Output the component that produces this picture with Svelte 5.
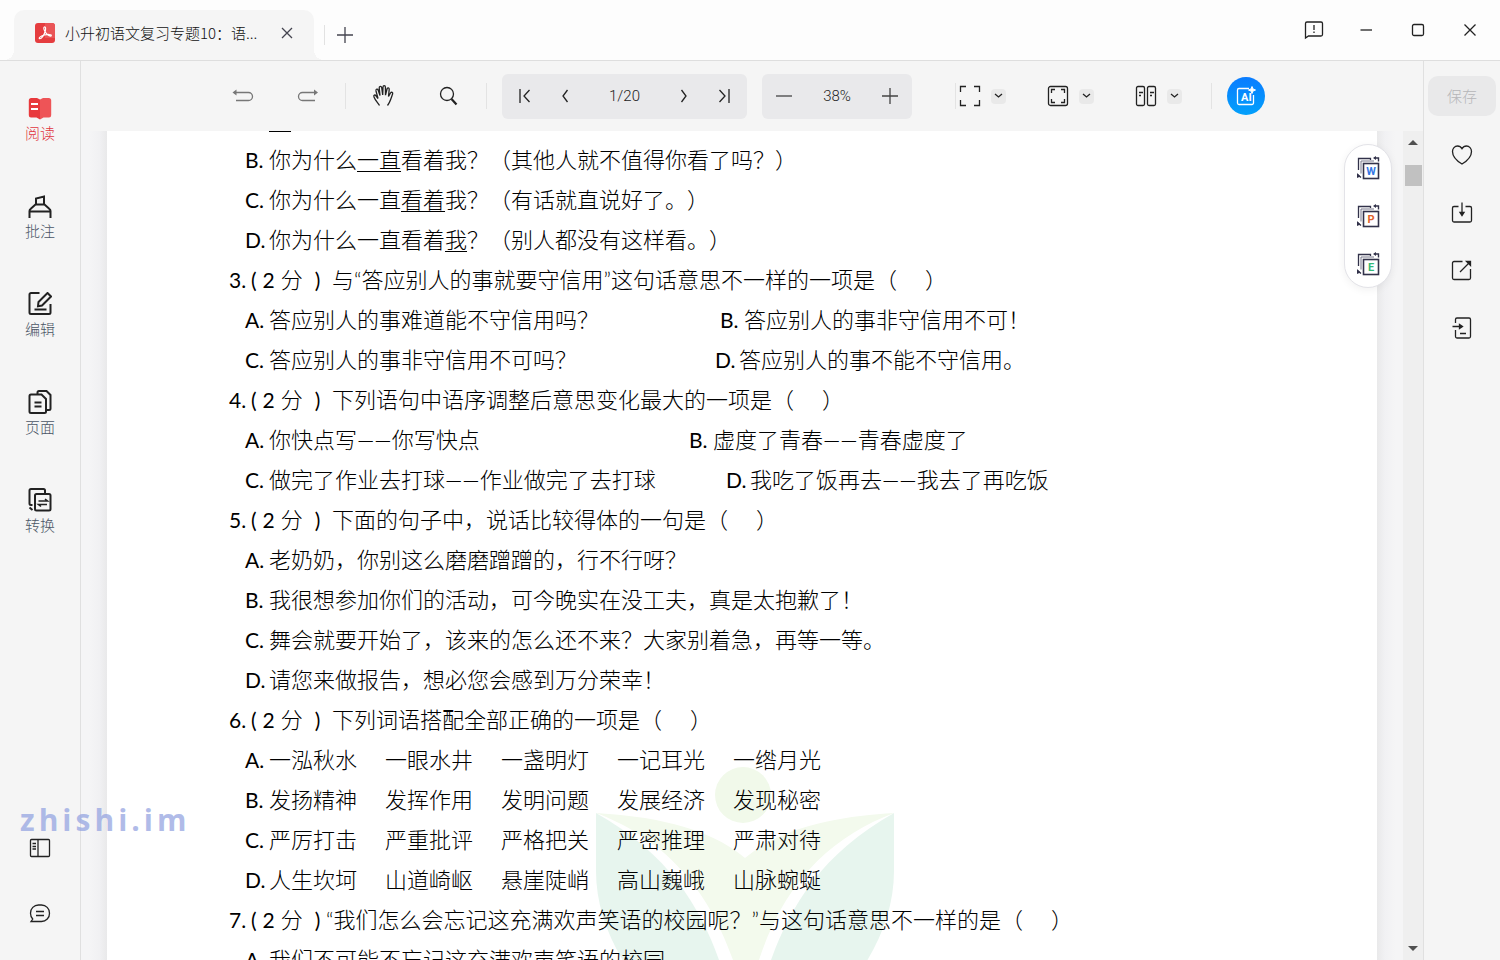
<script lang="ts">
  type Part = string | { u: string };

  interface Row {
    kind: "question" | "option" | "pair" | "words";
    label: string;
    parts?: Part[];
    first?: string;
    second?: string;
    secondLabel?: string;
    width?: number;
    words?: string[];
  }

  const modes = [
    { id: "read", label: "阅读" },
    { id: "annotate", label: "批注" },
    { id: "edit", label: "编辑" },
    { id: "pages", label: "页面" },
    { id: "convert", label: "转换" },
  ];

  const rows: Row[] = [
    { kind: "option", label: "A.", parts: [{ u: "你" }] },
    { kind: "option", label: "B.", parts: ["你为什么", { u: "一直" }, "看着我？（其他人就不值得你看了吗？）"] },
    { kind: "option", label: "C.", parts: ["你为什么一直", { u: "看着" }, "我？（有话就直说好了。）"] },
    { kind: "option", label: "D.", parts: ["你为什么一直看着", { u: "我" }, "？（别人都没有这样看。）"] },
    { kind: "question", label: "3.", parts: ["与“答应别人的事就要守信用”这句话意思不一样的一项是（　 ）"] },
    { kind: "pair", label: "A.", first: "答应别人的事难道能不守信用吗？", secondLabel: "B.", second: "答应别人的事非守信用不可！", width: 475 },
    { kind: "pair", label: "C.", first: "答应别人的事非守信用不可吗？", secondLabel: "D.", second: "答应别人的事不能不守信用。", width: 470 },
    { kind: "question", label: "4.", parts: ["下列语句中语序调整后意思变化最大的一项是（　 ）"] },
    { kind: "pair", label: "A.", first: "你快点写——你写快点", secondLabel: "B.", second: "虚度了青春——青春虚度了", width: 444 },
    { kind: "pair", label: "C.", first: "做完了作业去打球——作业做完了去打球", secondLabel: "D.", second: "我吃了饭再去——我去了再吃饭", width: 481 },
    { kind: "question", label: "5.", parts: ["下面的句子中，说话比较得体的一句是（　 ）"] },
    { kind: "option", label: "A.", parts: ["老奶奶，你别这么磨磨蹭蹭的，行不行呀？"] },
    { kind: "option", label: "B.", parts: ["我很想参加你们的活动，可今晚实在没工夫，真是太抱歉了！"] },
    { kind: "option", label: "C.", parts: ["舞会就要开始了，该来的怎么还不来？大家别着急，再等一等。"] },
    { kind: "option", label: "D.", parts: ["请您来做报告，想必您会感到万分荣幸！"] },
    { kind: "question", label: "6.", parts: ["下列词语搭配全部正确的一项是（　 ）"] },
    { kind: "words", label: "A.", words: ["一泓秋水", "一眼水井", "一盏明灯", "一记耳光", "一绺月光"] },
    { kind: "words", label: "B.", words: ["发扬精神", "发挥作用", "发明问题", "发展经济", "发现秘密"] },
    { kind: "words", label: "C.", words: ["严厉打击", "严重批评", "严格把关", "严密推理", "严肃对待"] },
    { kind: "words", label: "D.", words: ["人生坎坷", "山道崎岖", "悬崖陡峭", "高山巍峨", "山脉蜿蜒"] },
    { kind: "question", label: "7.", parts: ["“我们怎么会忘记这充满欢声笑语的校园呢？”与这句话意思不一样的是（　 ）"] },
    { kind: "option", label: "A.", parts: ["我们不可能不忘记这充满欢声笑语的校园"] },
  ];

  const exports = [
    { letter: "W", color: "#3478e5", title: "转Word" },
    { letter: "P", color: "#e0622c", title: "转PPT" },
    { letter: "E", color: "#35b978", title: "转Excel" },
  ];

  let mode = $state("read");
</script>

{#snippet chevron()}
  <button class="chevron" aria-label="展开">
    <svg width="9" height="6" viewBox="0 0 9 6"><path d="M1 1l3.5 3L8 1" /></svg>
  </button>
{/snippet}

<div class="app">
  <header class="titlebar">
    <div class="tab">
      <svg class="pdf" width="20" height="20" viewBox="0 0 20 20">
        <rect width="20" height="20" rx="3" fill="#e53d3f" />
        <path d="M10 0h7a3 3 0 0 1 3 3v12H10z" fill="#ea5557" />
        <path
          d="M9.300 4C10.800 3.400 10.900 6 10.100 8.800 9.100 12 6.400 16.200 4.600 15.700 3.200 15 6 12.800 9.500 12c3-.8 7-.8 6.800.6-.3 1.300-3.800-.3-5.300-2.600C9.500 7.800 8.300 4.700 9.300 4z"
          fill="none"
          stroke="#fff"
          stroke-width="1.2"
        />
      </svg>
      <span class="tab-title">小升初语文复习专题10：语...</span>
      <button class="tab-close" aria-label="关闭标签">
        <svg width="12" height="12" viewBox="0 0 12 12"><path d="M1 1l10 10M11 1L1 11" /></svg>
      </button>
    </div>
    <span class="tab-divider"></span>
    <button class="new-tab" aria-label="新建标签">
      <svg width="16" height="16" viewBox="0 0 16 16"><path d="M8 0v16M0 8h16" /></svg>
    </button>
    <div class="window-controls">
      <button aria-label="反馈">
        <svg width="20" height="20" viewBox="0 0 20 20">
          <path d="M1.500 18V3.500a1.500 1.500 0 0 1 1.500-1.500h14a1.500 1.500 0 0 1 1.500 1.500v11a1.500 1.500 0 0 1-1.500 1.500H4.500z" />
          <path d="M10 5v5M10 11.500v1.500" />
        </svg>
      </button>
      <button aria-label="最小化">
        <svg width="20" height="20" viewBox="0 0 20 20"><path d="M4.500 10h11.500" /></svg>
      </button>
      <button aria-label="最大化">
        <svg width="20" height="20" viewBox="0 0 20 20"><rect x="4.500" y="4.500" width="11" height="11" rx="1.500" /></svg>
      </button>
      <button aria-label="关闭">
        <svg width="20" height="20" viewBox="0 0 20 20"><path d="M4.500 4.500l11 11M15.500 4.500l-11 11" /></svg>
      </button>
    </div>
  </header>

  <div class="body">
    <nav class="sidebar">
      {#each modes as m}
        <button class="mode" class:active={mode === m.id} onclick={() => (mode = m.id)}>
          <svg width="24" height="24" viewBox="0 0 24 24">
            {#if m.id === "read"}
              <path d="M.8 4.500A2.500 2.500 0 0 1 3.300 2H9l3 1.500V23.500l-3.500-2H3A2.200 2.200 0 0 1 .8 19.300z" fill="#e8393c" stroke="none" />
              <path d="M12 3.500L15 2h5.700a2.500 2.500 0 0 1 2.500 2.500v14.800a2.200 2.200 0 0 1-2.200 2.200h-5.500L12 23.500z" fill="#ee5457" stroke="none" />
              <path d="M3 8h7M3 13h7" stroke="#fff" />
            {:else if m.id === "annotate"}
              <path d="M1.500 24v-7c0-1 .4-1.700 1.300-2.200L7.500 10.500h9l4.700 4.300c.9.500 1.300 1.200 1.300 2.200V24M1.500 17.500h21" />
              <path d="M8 10.500V4.500l8-2v8" />
            {:else if m.id === "edit"}
              <path d="M11.500 1H3a1.500 1.500 0 0 0-1.500 1.500v18A1.500 1.500 0 0 0 3 22h18a1.500 1.500 0 0 0 1.500-1.500v-8.500M6.500 17.500h12" />
              <path d="M19.500 1l3.500 3.500L14 13.500l-4 .7.500-4.200z" />
            {:else if m.id === "pages"}
              <path d="M9.500 4V2.500c0-.8.500-1.500 1.500-1.500h7.500l4 4v13.500c0 1-.5 1.500-1.500 1.500h-2" />
              <path d="M3 4.500h10.500l4.500 4.500v12.500c0 1-.5 1.500-1.500 1.500H3c-1 0-1.500-.5-1.500-1.500V6c0-1 .5-1.500 1.500-1.500zM6.500 12.500h7M6.500 16.500h7" />
            {:else}
              <path d="M4.500 17H3c-1 0-1.500-.5-1.500-1.500V2.500C1.500 1.500 2 1 3 1h12.500c1 0 1.500.5 1.500 1.500v3" />
              <rect x="7" y="6" width="15.5" height="16.5" rx="1.5" />
              <path d="M10.500 13h9l-2.500-2M19 16.500h-8.500l2.500 2" stroke-width="1.6" />
              <path d="M1.500 19.500l3 2.500" />
            {/if}
          </svg>
          <span>{m.label}</span>
        </button>
      {/each}
      <div class="sidebar-bottom">
        <button aria-label="侧边栏">
          <svg width="22" height="22" viewBox="0 0 22 22">
            <rect x="1.5" y="2.5" width="19" height="17" rx="1" />
            <path d="M9 2.500v17M3.500 6.500h3.500M3.500 9.500h3.500M3.500 12h3.500" />
          </svg>
        </button>
        <button aria-label="评论">
          <svg width="22" height="22" viewBox="0 0 22 22">
            <path d="M2 19.500h10.500a8 8 0 0 0 8-8.300 8 8 0 0 0-8-8.200h-3a8 8 0 0 0-8 8.200c0 2.500.8 4.300 2.200 5.800zM7 9.500h8M7 13.500h8" />
          </svg>
        </button>
      </div>
    </nav>

    <main class="main">
      <div class="toolbar">
        <div class="tools">
          <button class="dim" aria-label="撤销">
            <svg width="24" height="24" viewBox="0 0 24 24">
              <path d="M3 8.500h14.500a4 4 0 0 1 0 8H5" />
              <path d="M5.500 5.500v6L1.500 8.500z" fill="#777" stroke="none" />
            </svg>
          </button>
          <button class="dim" aria-label="重做">
            <svg width="24" height="24" viewBox="0 0 24 24">
              <path d="M20 8.500H6.500a4 4 0 0 0 0 8H19" />
              <path d="M18 5.500v6l4-3z" fill="#777" stroke="none" />
            </svg>
          </button>
        </div>
        <span class="divider"></span>
        <div class="tools">
          <button aria-label="抓手">
            <svg width="24" height="24" viewBox="0 0 24 24">
              <path
                d="M7.500 21.500c-1.500-2.500-4-4.500-5.500-8.500-.8-2 1-2.700 2-1.200L6 14.500 4 7c-.4-2 1.600-2.500 2.200-.8L8 11.500 7.200 4c-.1-2 2.100-2.200 2.500-.3l1 7.300.3-8c.1-1.800 2.300-1.700 2.400 0l.1 8.200L15 5c.4-1.700 2.400-1.300 2.200.5l-.7 7 2-3.500c1-1.500 2.700-.5 2.100 1-1.600 4.500-2.600 8.500-5.100 11.500"
              />
            </svg>
          </button>
          <button aria-label="搜索">
            <svg width="24" height="24" viewBox="0 0 24 24">
              <circle cx="10" cy="10" r="6.5" />
              <path d="M14.500 15l5 5.500" stroke-width="2.2" />
            </svg>
          </button>
        </div>
        <span class="divider"></span>
        <div class="box pager">
          <button aria-label="第一页"><svg width="16" height="16" viewBox="0 0 16 16"><path d="M3 1v14M12.500 2L7 8l5.500 6" /></svg></button>
          <button aria-label="上一页"><svg width="16" height="16" viewBox="0 0 16 16"><path d="M10.500 2L6 8l4.500 6" /></svg></button>
          <span class="value">1/20</span>
          <button aria-label="下一页"><svg width="16" height="16" viewBox="0 0 16 16"><path d="M5.500 2L10 8l-4.500 6" /></svg></button>
          <button aria-label="最后一页"><svg width="16" height="16" viewBox="0 0 16 16"><path d="M13 1v14M3.500 2L9 8l-5.500 6" /></svg></button>
        </div>
        <div class="box zoom">
          <button aria-label="缩小"><svg width="16" height="16" viewBox="0 0 16 16"><path d="M0 8h16" /></svg></button>
          <span class="value">38%</span>
          <button aria-label="放大"><svg width="16" height="16" viewBox="0 0 16 16"><path d="M0 8h16M8 0v16" /></svg></button>
        </div>
        <span class="divider wide"></span>
        <div class="views">
          <div class="split">
            <button aria-label="全屏">
              <svg width="24" height="24" viewBox="0 0 24 24"><path d="M2.500 8V2.500H8M16 2.500h5.500V8M21.500 16v5.500H16M8 21.500H2.500V16" /></svg>
            </button>
            {@render chevron()}
          </div>
          <div class="split">
            <button aria-label="适合页面">
              <svg width="24" height="24" viewBox="0 0 24 24">
                <rect x="2.5" y="2.5" width="19" height="19" rx="2" />
                <path d="M5.500 9V5.500H9M15 5.500h3.500V9M18.500 15v3.500H15M9 18.500H5.500V15" />
              </svg>
            </button>
            {@render chevron()}
          </div>
          <div class="split">
            <button aria-label="双页">
              <svg width="24" height="24" viewBox="0 0 24 24">
                <rect x="2.5" y="2.5" width="8" height="19" rx="1.5" />
                <rect x="13.5" y="2.5" width="8" height="19" rx="1.5" />
                <path d="M5 8.500h4M5 11.500h2M16 8.500h4M16 11.500h2" />
              </svg>
            </button>
            {@render chevron()}
          </div>
        </div>
        <span class="divider last"></span>
        <button class="ai" aria-label="AI">
          <svg width="38" height="38" viewBox="0 0 38 38">
            <defs>
              <linearGradient id="ai-fill" x1="0" y1="0" x2="0" y2="1">
                <stop offset="0" stop-color="#0a7cff" />
                <stop offset="1" stop-color="#02a0fb" />
              </linearGradient>
            </defs>
            <circle cx="19" cy="19" r="19" fill="url(#ai-fill)" stroke="none" />
            <path d="M22 11.500H12a1.500 1.500 0 0 0-1.500 1.500v13a1.500 1.500 0 0 0 1.500 1.500h13a1.500 1.500 0 0 0 1.500-1.500V18" stroke="#fff" />
            <path d="M25 9.500l1 2.500 2.500 1-2.500 1-1 2.500-1-2.500-2.500-1 2.500-1z" fill="#fff" stroke="#fff" stroke-width="1" />
            <text x="14" y="24" fill="#fff" stroke="none" font-size="11" font-weight="700">AI</text>
          </svg>
        </button>
      </div>

      <div class="viewer">
        <div class="gutter left"></div>
        <article class="sheet">
          <svg class="leaf" width="298" height="260" viewBox="0 0 298 260">
            <circle cx="147" cy="28" r="28" fill="#f1f9ea" />
            <path d="M0 46C50 49 110 58 149 91 188 58 248 49 298 46 240 68 190 110 163 193V260H137V193C108 110 58 68 0 46z" fill="#f3faed" />
            <path d="M0 46C72 86 104 140 123 193L140 260H80C32 212 0 160 0 104z" fill="#e7f5ee" />
            <path d="M298 46C226 86 194 140 175 193L158 260h60c48-48 80-100 80-156z" fill="#e7f5ee" />
          </svg>
          {#each rows as row}
            <div class="row" class:question={row.kind === "question"}>
              {#if row.kind === "question"}
                <span class="number">{row.label}</span>
                <span class="score"><span>(</span><span>2</span><span class="unit">分</span><span class="close">)</span></span>
                <span class="stem" class:quoted={row.label === "7."}>{#each row.parts ?? [] as part}{part}{/each}</span>
              {:else if row.kind === "option"}
                <span class="label">{row.label}</span>
                <span>{#each row.parts ?? [] as part}{#if typeof part === "string"}{part}{:else}<u>{part.u}</u>{/if}{/each}</span>
              {:else if row.kind === "pair"}
                <div class="cell" style="width: {row.width}px"><span class="label">{row.label}</span><span>{row.first}</span></div>
                <div class="cell"><span class="label">{row.secondLabel}</span><span>{row.second}</span></div>
              {:else}
                <span class="label">{row.label}</span>
                <div class="words">
                  {#each row.words ?? [] as word}<span>{word}</span>{/each}
                </div>
              {/if}
            </div>
          {/each}
        </article>
        <div class="gutter right"></div>
        <div class="scrollbar">
          <span class="arrow up"></span>
          <span class="thumb"></span>
          <span class="arrow down"></span>
        </div>
        <div class="export">
          {#each exports as item}
            <button aria-label={item.title}>
              <svg width="24" height="24" viewBox="0 0 24 24">
                <path d="M2.500 14V2.500H14.500V4" />
                <path d="M5 17.500V5H18" stroke-width="1" stroke="#77778a" />
                <rect x="7.500" y="7.500" width="15" height="15" fill="#fff" stroke-width="1.6" />
                <path d="M18.500 2H22.500V5.500M1.500 18.500l3.500 3" stroke-width="1.4" />
                <path d="M20 0v4l-3-2zM1 17v5l3.500-1.500z" fill="#32324a" stroke="none" />
                <text x="15" y="19" text-anchor="middle" fill={item.color} stroke="none" font-size="11" font-weight="700">{item.letter}</text>
              </svg>
            </button>
          {/each}
        </div>
      </div>
    </main>

    <aside class="actions">
      <button class="save" disabled>保存</button>
      <button aria-label="收藏">
        <svg width="24" height="24" viewBox="0 0 24 24">
          <path d="M12 21C7 18 2.500 13.500 2.500 8.500c0-3 2.200-5.500 5-5.500 2 0 3.500 1 4.500 2.700C13 4 14.500 3 16.500 3c2.800 0 5 2.500 5 5.500 0 5-4.500 9.500-9.500 12.500z" />
        </svg>
      </button>
      <button aria-label="下载">
        <svg width="24" height="24" viewBox="0 0 24 24">
          <path d="M8.500 5.500H4A1.500 1.500 0 0 0 2.500 7v12.500A1.500 1.500 0 0 0 4 21h16a1.500 1.500 0 0 0 1.500-1.500V7A1.500 1.500 0 0 0 20 5.500h-4.500M12 1.500V14" />
          <path d="M10 11.500h4l-2 3z" fill="#222" />
        </svg>
      </button>
      <button aria-label="分享">
        <svg width="24" height="24" viewBox="0 0 24 24">
          <path d="M12.500 2.500H4A1.500 1.500 0 0 0 2.500 4v15A1.500 1.500 0 0 0 4 20.500h15a1.500 1.500 0 0 0 1.500-1.500v-9M10 13L19 4" />
          <path d="M16.500 2.500h4V6.500z" fill="#222" />
        </svg>
      </button>
      <button aria-label="导出">
        <svg width="24" height="24" viewBox="0 0 24 24">
          <path d="M5.500 6V2.500A1.500 1.500 0 0 1 7 1h12a1.500 1.500 0 0 1 1.500 1.500v17A1.500 1.500 0 0 1 19 21H7a1.500 1.500 0 0 1-1.500-1.500V13M2.500 9.500H11M10 16.500h6" />
          <path d="M9.500 7.500v4l3-2z" fill="#222" />
        </svg>
      </button>
    </aside>
  </div>

  <div class="site-mark">zhishi.im</div>
</div>

<style>
  :global(body) {
    margin: 0;
    overflow: hidden;
    font-family: "Noto Sans CJK SC", sans-serif;
  }

  button {
    display: flex;
    align-items: center;
    justify-content: center;
    flex: none;
    padding: 0;
    border: 0;
    background: none;
    color: inherit;
    font: inherit;
  }

  svg {
    flex: none;
    fill: none;
    stroke: #222;
    stroke-width: 1.3;
  }

  svg text { font-family: Roboto, sans-serif; }

  .app {
    position: relative;
    display: flex;
    flex-direction: column;
    height: 100vh;
    background: #f5f5f5;
    color: #222;
  }

  .titlebar {
    display: flex;
    align-items: flex-end;
    height: 60px;
    padding-left: 14px;
    border-bottom: 1px solid #dedede;
    background: #fdfdfd;
  }

  .tab {
    position: relative;
    display: flex;
    align-items: center;
    box-sizing: border-box;
    width: 300px;
    height: 50px;
    padding: 0 21px 4px 21px;
    border-radius: 10px 10px 0 0;
    background: #f5f5f5;
  }

  /* flared feet of the tab */
  .tab::before,
  .tab::after {
    content: "";
    position: absolute;
    bottom: 0;
    width: 10px;
    height: 10px;
  }

  .tab::before {
    right: 100%;
    background: radial-gradient(circle at 0 0, transparent 10px, #f5f5f5 10px);
  }

  .tab::after {
    left: 100%;
    background: radial-gradient(circle at 100% 0, transparent 10px, #f5f5f5 10px);
  }

  .pdf { stroke: none; }

  .tab-title {
    flex: 1;
    margin-left: 10px;
    font-size: 15px;
    font-weight: 300;
    line-height: 20px;
    color: #111;
    white-space: nowrap;
  }

  .tab-close svg,
  .new-tab svg { stroke: #44444f; }

  .tab-divider {
    width: 1px;
    height: 20px;
    margin: 0 12px 15px 10px;
    background: #e2e2e2;
  }

  .new-tab { margin-bottom: 17px; }

  .window-controls {
    display: flex;
    gap: 32px;
    margin: 0 20px 20px auto;
  }

  .body {
    display: flex;
    flex: 1;
    min-height: 0;
  }

  .sidebar {
    display: flex;
    flex-direction: column;
    align-items: center;
    box-sizing: border-box;
    width: 81px;
    padding: 35px 0 36px;
    border-right: 1px solid #e0e0e0;
  }

  .mode {
    flex-direction: column;
    height: 50px;
    margin-bottom: 48px;
    font-size: 15px;
    font-weight: 300;
    line-height: 26px;
    color: #4b5566;
  }

  .mode svg { stroke-width: 2; }
  .mode.active { color: #e0363f; }

  .sidebar-bottom {
    display: flex;
    flex-direction: column;
    gap: 43px;
    margin-top: auto;
  }

  .main {
    display: flex;
    flex: 1;
    flex-direction: column;
    min-width: 0;
  }

  .toolbar {
    display: flex;
    flex: none;
    align-items: center;
    justify-content: center;
    height: 70px;
    padding-right: 8px;
  }

  .tools {
    display: flex;
    gap: 41px;
  }

  .dim svg { stroke: #777; }

  .divider {
    width: 1px;
    height: 26px;
    margin: 0 26px 0 25px;
    background: #e3e3e3;
  }

  .pager { margin-left: -11px; }
  .divider.wide { margin: 0 2px 0 43px; }
  .divider.last { margin: 0 15px 0 29px; }

  .box {
    display: flex;
    align-items: center;
    justify-content: space-between;
    box-sizing: border-box;
    height: 45px;
    border-radius: 6px;
    background: #e9e9eb;
  }

  .pager {
    width: 245px;
    padding: 0 14px;
  }

  .pager button { width: 18px; }
  .pager .value { width: 56px; }

  .zoom {
    width: 150px;
    margin-left: 15px;
    padding: 0 14px;
  }

  .zoom svg { stroke: #444; }

  .value {
    font-family: Roboto, sans-serif;
    font-size: 15px;
    font-weight: 300;
    text-align: center;
  }

  .views {
    display: flex;
    gap: 40px;
  }

  .split {
    display: flex;
    align-items: center;
    gap: 9px;
  }

  .chevron {
    width: 15px;
    height: 15px;
    border-radius: 4px;
    background: #e9e9e9;
  }

  .viewer {
    position: relative;
    display: flex;
    flex: 1;
    min-height: 0;
    overflow: hidden;
  }

  .gutter {
    flex: none;
    width: 26px;
  }

  .gutter.left { background: linear-gradient(to right, #f5f5f6 30%, #f1f1f3 70%, #e9e9ea); }
  .gutter.right { background: linear-gradient(to left, #f5f5f6 30%, #f1f1f3 70%, #e9e9ea); }

  .sheet {
    position: relative;
    flex: 1;
    min-width: 0;
    margin-top: -31px;
    padding-left: 122px;
    background: #fff;
    font-family: Lato, "Noto Sans CJK SC", sans-serif;
    font-size: 22px;
    font-weight: 300;
    line-height: 40px;
    text-spacing-trim: space-all;
    white-space: nowrap;
    color: #000;
  }

  .leaf {
    position: absolute;
    top: 667px;
    left: 489px;
    stroke: none;
  }

  .row {
    position: relative;
    display: flex;
    height: 40px;
    padding-left: 16px;
  }

  .row.question { padding-left: 0; }

  .row u {
    text-decoration-thickness: 1px;
    text-underline-offset: 3px;
  }

  .number,
  .score,
  .label {
    font-size: 21px;
    font-weight: 400;
  }

  .number { width: 22px; }

  .score {
    display: flex;
    gap: 6px;
    width: 81px;
  }

  .score .unit {
    font-size: 22px;
    font-weight: 300;
  }

  .score .close { margin-left: 6px; }
  .stem { white-space: pre; }
  .stem.quoted { margin-left: -6px; }
  .label { width: 24px; }

  .cell {
    display: flex;
    flex: none;
  }

  .words {
    display: flex;
    gap: 28px;
  }

  .scrollbar {
    display: flex;
    flex-direction: column;
    align-items: center;
    width: 20px;
    padding: 9px 0;
    background: #efefef;
  }

  .arrow {
    border: 5px solid transparent;
  }

  .arrow.up {
    border-top: 0;
    border-bottom-color: #505050;
  }

  .arrow.down {
    margin-top: auto;
    border-bottom: 0;
    border-top-color: #505050;
  }

  .thumb {
    width: 17px;
    height: 21px;
    margin-top: 20px;
    background: #c1c1c1;
  }

  /* floats over the right edge of the page */
  .export {
    position: absolute;
    top: 13px;
    right: 31px;
    display: flex;
    flex-direction: column;
    align-items: center;
    gap: 24px;
    width: 46px;
    padding: 11px 0;
    border: 1px solid #e3e3e8;
    border-radius: 24px;
    background: #fff;
    box-shadow: 0 2px 8px rgba(0, 0, 0, 0.06);
  }

  .export svg { stroke: #32324a; }

  .actions {
    display: flex;
    flex-direction: column;
    align-items: center;
    gap: 34px;
    box-sizing: border-box;
    width: 77px;
    padding-top: 15px;
    border-left: 1px solid #e0e0e0;
  }

  .save {
    width: 68px;
    height: 40px;
    margin-bottom: -7px;
    border-radius: 10px;
    background: #e9e9ea;
    font-size: 15px;
    font-weight: 300;
    line-height: 20px;
    color: #b5b5b8;
  }

  .site-mark {
    position: absolute;
    bottom: 120px;
    left: 20px;
    font-family: "Open Sans", sans-serif;
    font-size: 30px;
    font-weight: 700;
    line-height: 40px;
    letter-spacing: 4px;
    color: rgba(150, 165, 225, 0.75);
    pointer-events: none;
  }
</style>
